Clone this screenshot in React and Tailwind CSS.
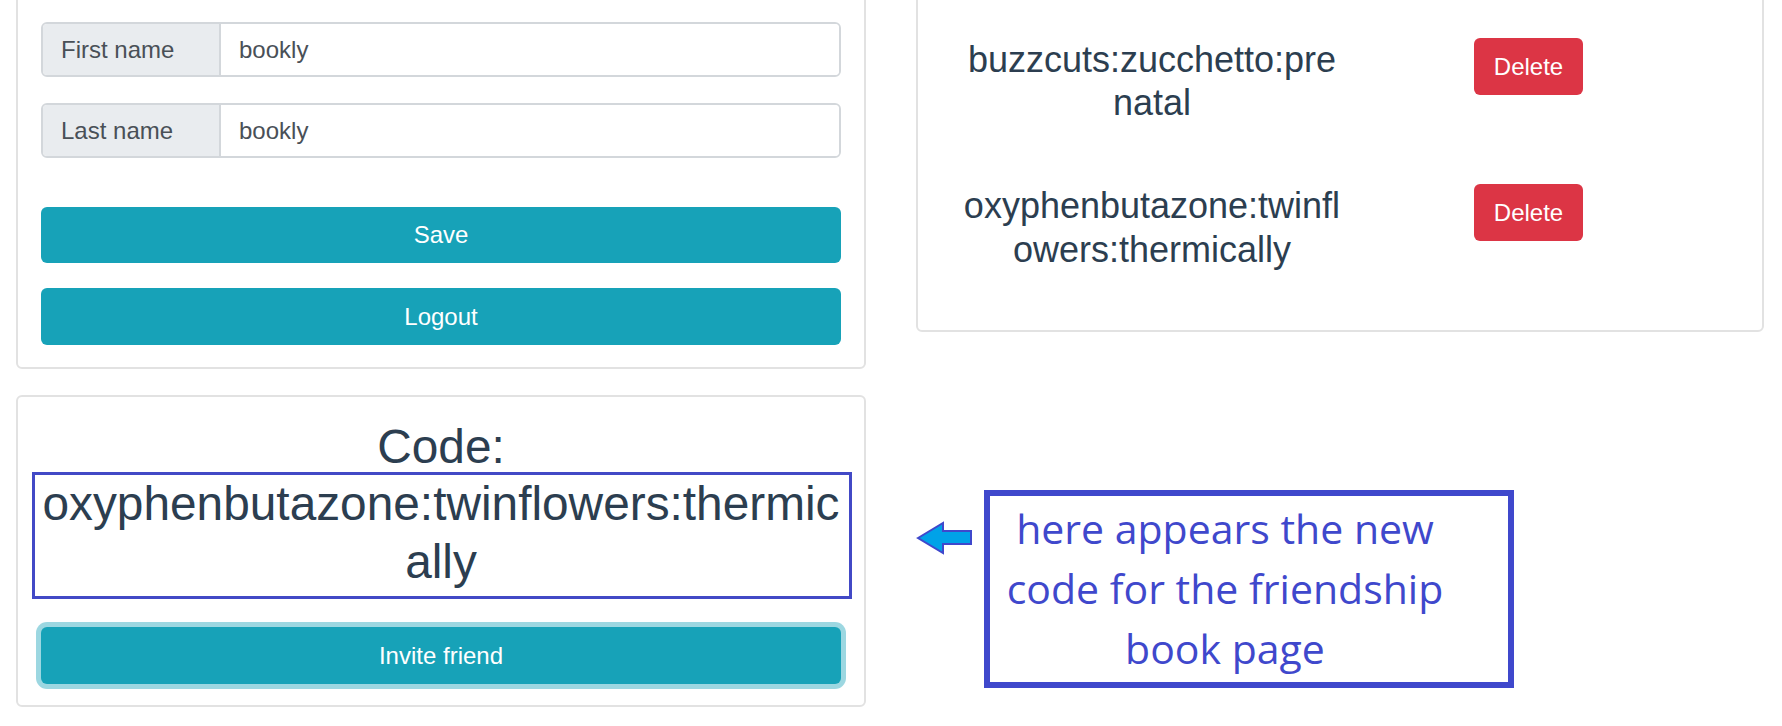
const InputRow = ({ label, value, className = "" }) => {
  return (
    <div className={`flex h-[55px] rounded-[6px] border-2 border-[#d3d7db] overflow-hidden ${className}`}>
      <div className="flex items-center w-[178px] bg-[#e9ecef] border-r-2 border-[#d3d7db] pl-[18px] text-[24px] text-[#495057]">
        {label}
      </div>
      <div className="flex items-center flex-1 bg-white pl-[18px] text-[24px] text-[#495057]">{value}</div>
    </div>
  );
};

const CodeRow = ({ code, className = "" }) => {
  return (
    <div className={`flex items-start ${className}`}>
      <div className="w-[380px] ml-[44px] text-center text-[36px] leading-[1.2] text-[#2c3e50] break-all">{code}</div>
      <button className="ml-[132px] w-[109px] h-[57px] rounded-[6px] bg-[#dc3545] text-white text-[24px]">Delete</button>
    </div>
  );
};

const Arrow = () => (
  <svg width="57" height="34" viewBox="0 0 57 34" className="mt-[31px] shrink-0">
    <polygon
      points="2,17 27,2 27,10 55,10 55,23 27,23 27,32"
      fill="#00a2e8"
      stroke="#3f48cc"
      strokeWidth="2"
      strokeLinejoin="miter"
    />
  </svg>
);

const App = () => {
  return (
    <div className="w-[1782px] h-[726px] overflow-hidden bg-white font-['Liberation_Sans',Arial,sans-serif]">
      <div className="flex items-start gap-[50px] pl-[16px] -mt-[10px]">
        <div className="flex flex-col w-[850px]">
          <div className="border-2 border-[#e2e2e2] rounded-[6px] px-[23px] pt-[30px] pb-[22px]">
            <InputRow label="First name" value="bookly" />
            <InputRow label="Last name" value="bookly" className="mt-[26px]" />
            <button className="mt-[49px] w-full h-[56px] rounded-[6px] bg-[#17a2b8] text-white text-[24px]">Save</button>
            <button className="mt-[25px] w-full h-[57px] rounded-[6px] bg-[#17a2b8] text-white text-[24px]">Logout</button>
          </div>

          <div className="mt-[26px] border-2 border-[#e2e2e2] rounded-[6px] px-[23px] pt-[21px] pb-[21px]">
            <div className="text-center text-[47.8px] leading-[1.2] text-[#2c3e50]">Code:</div>
            <div className="-mt-[3px] -ml-[9px] -mr-[11px] border-[3px] border-[#4249c6] pl-[6px] pr-[8px] pb-[6px]">
              <div className="text-center text-[47.8px] leading-[1.2] text-[#2c3e50] break-all">
                oxyphenbutazone:twinflowers:thermically
              </div>
            </div>
            <button className="mt-[28px] w-full h-[57px] rounded-[6px] bg-[#17a2b8] text-white text-[24px] shadow-[0_0_0_5px_rgba(58,176,195,0.5)]">
              Invite friend
            </button>
          </div>
        </div>

        <div className="flex flex-col w-[848px]">
          <div className="border-2 border-[#e2e2e2] rounded-[6px] pt-[46px] pb-[59px]">
            <CodeRow code="buzzcuts:zucchetto:prenatal" />
            <CodeRow code="oxyphenbutazone:twinflowers:thermically" className="mt-[60px]" />
          </div>

          <div className="flex items-start gap-[11px] mt-[158px]">
            <Arrow />
            <div className="w-[530px] h-[198px] border-[6px] border-[#3f48cc] pt-[2px] pr-[48px]">
              <p className="text-center font-['Open_Sans',sans-serif] text-[41px] leading-[60px] text-[#3f48cc]">
                here appears the new
                <br />
                code for the friendship
                <br />
                book page
              </p>
            </div>
          </div>
        </div>
      </div>
    </div>
  );
};

export default App;
